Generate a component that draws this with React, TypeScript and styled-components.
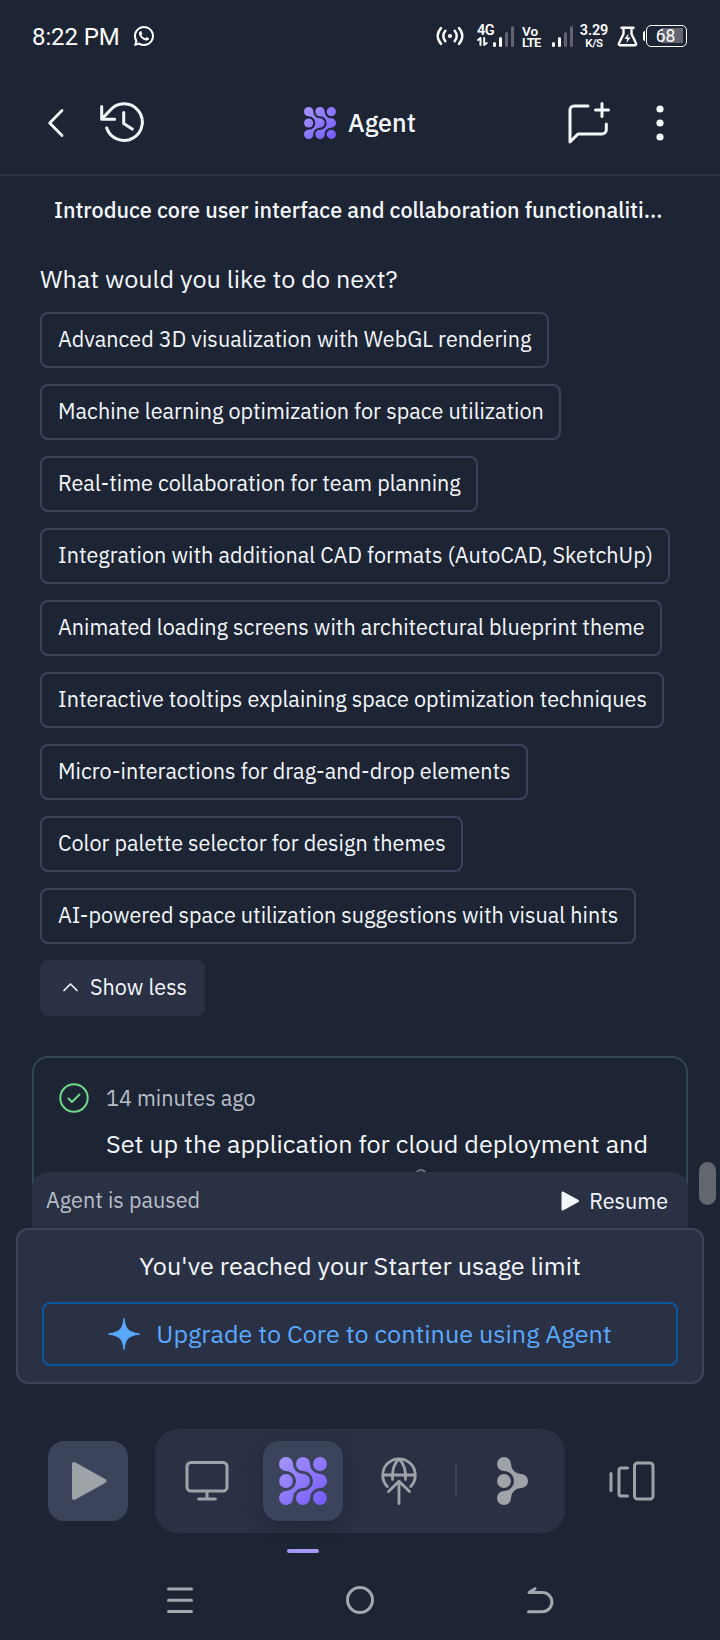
import React from 'react';
import styled, { createGlobalStyle } from 'styled-components';
import { RiWhatsappLine } from 'react-icons/ri';

const color = {
  bg: '#1d2433',
  raised: '#2b3144',
  high: '#3c445b',
  outline: '#3b4259',
  text: '#f4f8fc',
  dim: '#b9bec8',
  icon: '#9ea3a7',
  blue: '#58a9ff',
  blueLine: '#0c559f',
  green: '#6fd98a',
};

const sans = '"IBM Plex Sans", "Noto Sans", sans-serif';
const small = '21.6px';
const large = '25.2px';

const GlobalStyle = createGlobalStyle`
  * { box-sizing: border-box; }
  body { margin: 0; background: ${color.bg}; color: ${color.text}; font-family: ${sans}; }
  svg { display: block; flex: none; }
  button { background: none; border: 0; padding: 0; color: inherit; font: inherit; display: block; }
`;

const Screen = styled.div`
  position: relative;
  width: 720px;
  height: 1640px;
  display: flex;
  flex-direction: column;
  overflow: hidden;
  background: ${color.bg};
`;

/* System status bar */
const StatusBar = styled.div`
  height: 72px;
  flex: none;
  display: flex;
  align-items: center;
  padding: 0 33px 0 32px;
  font-family: Roboto, sans-serif;
  color: #fff;
`;
const Clock = styled.span`
  font-size: 24px;
  letter-spacing: -0.1px;
  line-height: 72px;
  margin-right: 12px;
  padding-top: 1px;
`;
const StatusIcons = styled.div`
  margin-left: auto;
  display: flex;
  align-items: center;
  height: 22px;
`;
const Stack = styled.div<{ $w: number; $ml: number; $center?: boolean }>`
  width: ${(p) => p.$w}px;
  margin-left: ${(p) => p.$ml}px;
  height: 22px;
  display: flex;
  flex-direction: column;
  align-items: ${(p) => (p.$center ? 'center' : 'flex-start')};
`;
const Tiny = styled.span<{ $size: number; $ls?: number }>`
  flex: none;
  font-size: ${(p) => p.$size}px;
  font-weight: 600;
  line-height: 12px;
  height: 12px;
  letter-spacing: ${(p) => p.$ls ?? 0}px;
  white-space: nowrap;
`;
const Bars = styled.div<{ $ml: number }>`
  display: flex;
  align-items: flex-end;
  gap: 3px;
  width: 21px;
  height: 21px;
  margin-left: ${(p) => p.$ml}px;
`;
const Bar = styled.i<{ $h: number; $on?: boolean }>`
  width: 3px;
  height: ${(p) => p.$h}px;
  border-radius: 1.5px;
  background: ${(p) => (p.$on ? '#fff' : '#61646f')};
`;
const Flask = styled.svg`
  margin-left: 9px;
`;
const BatteryCap = styled.i`
  width: 2px;
  height: 10px;
  margin-left: 5px;
  border-radius: 2px 0 0 2px;
  background: #fff;
`;
const Battery = styled.div`
  width: 41px;
  height: 22px;
  margin-left: 1px;
  border: 1.5px solid #fff;
  border-radius: 5px;
  display: flex;
  align-items: center;
  justify-content: center;
  font-size: 17.5px;
  line-height: 20px;
  padding-right: 2px;
  background: linear-gradient(#646773, #646773) no-repeat 14px 2px / 22px 15px;
`;

/* App header */
const Header = styled.header`
  height: 104px;
  flex: none;
  display: grid;
  grid-template-columns: 1fr auto 1fr;
  align-items: center;
  padding: 0 56px 0 46px;
  border-bottom: 2px solid #2a3143;
`;
const HeaderSide = styled.div<{ $end?: boolean }>`
  display: flex;
  align-items: center;
  justify-content: ${(p) => (p.$end ? 'flex-end' : 'flex-start')};
  gap: ${(p) => (p.$end ? 44 : 33)}px;
`;
const AppTitle = styled.h1`
  margin: 0 0 0 10px;
  display: flex;
  align-items: center;
  gap: 12px;
  font: 500 ${large}/32px ${sans};
`;

/* Conversation */
const Feed = styled.main`
  height: 1012px;
  flex: none;
  overflow: hidden;
  padding: 18px 32px 0;
`;
const Heading = styled.h2`
  margin: 0 22px;
  font-size: ${small};
  font-weight: 500;
  line-height: 32px;
  white-space: nowrap;
`;
const Question = styled.p`
  margin: 37px 8px 17px;
  font: 400 ${large}/32px ${sans};
`;
const Options = styled.div`
  display: flex;
  flex-direction: column;
  align-items: flex-start;
  gap: 16px;
  padding-left: 8px;
`;
const Chip = styled.button`
  height: 56px;
  padding: 0 15.4px 2px 16px;
  border: 2px solid ${color.outline};
  border-radius: 8px;
  font-size: ${small};
  line-height: 50px;
  text-align: left;
  white-space: nowrap;
`;
const ShowLess = styled.button`
  width: 165px;
  height: 56px;
  padding: 0 0 2px 23px;
  display: flex;
  align-items: center;
  gap: 12px;
  border-radius: 8px;
  background: ${color.raised};
  font-size: ${small};
  white-space: nowrap;
`;
const Card = styled.article`
  margin-top: 40px;
  height: 260px;
  padding: 24px 24px 0 25px;
  border: 2px solid #344653;
  border-radius: 16px;
`;
const CardMeta = styled.div`
  display: flex;
  align-items: center;
  gap: 17px;
  height: 32px;
  color: ${color.dim};
  font-size: ${small};
`;
const CardText = styled.p`
  margin: 14px 0 0 47px;
  font: 400 ${large}/32px ${sans};
  white-space: nowrap;
`;
const Ring = styled.i`
  display: block;
  width: 12px;
  height: 12px;
  margin: 9px 0 0 356px;
  border: 2px solid #6d727d;
  border-radius: 50%;
`;
const ScrollThumb = styled.div`
  position: absolute;
  right: 4px;
  top: 1162px;
  width: 17px;
  height: 43px;
  border-radius: 9px;
  background: #63656f;
`;

/* Paused state and usage limit */
const PausedBar = styled.div`
  position: relative;
  height: 56px;
  flex: none;
  margin: -16px 32px 0;
  padding: 0 20px 0 14px;
  display: flex;
  align-items: center;
  justify-content: space-between;
  border-radius: 16px 16px 0 0;
  background: ${color.raised};
  color: ${color.dim};
  font-size: ${small};
`;
const Resume = styled.button`
  display: flex;
  align-items: center;
  gap: 10px;
  color: ${color.text};
  padding-top: 2px;
`;
const LimitPanel = styled.section`
  height: 156px;
  flex: none;
  margin: 0 16px;
  padding: 20px 24px 16px;
  display: flex;
  flex-direction: column;
  gap: 20px;
  border: 2px solid #3c445c;
  border-radius: 12px;
  background: ${color.raised};
  font: 400 ${large}/32px ${sans};
`;
const LimitText = styled.p`
  margin: 0;
  text-align: center;
`;
const Upgrade = styled.button`
  height: 64px;
  display: flex;
  align-items: center;
  justify-content: center;
  gap: 16px;
  border: 2px solid ${color.blueLine};
  border-radius: 8px;
  color: ${color.blue};
`;

/* Bottom toolbar */
const Toolbar = styled.nav`
  height: 104px;
  flex: none;
  margin-top: 45px;
  padding: 0 48px;
  display: flex;
  align-items: center;
  justify-content: space-between;
  color: ${color.icon};
`;
const ToolGroup = styled.div`
  height: 104px;
  display: flex;
  align-items: center;
  gap: 16px;
  padding: 12px;
  border-radius: 24px;
  background: ${color.raised};
`;
const Tool = styled.button<{ $filled?: boolean; $active?: boolean }>`
  width: 80px;
  height: 80px;
  display: grid;
  place-items: center;
  border-radius: 16px;
  background: ${(p) => (p.$filled || p.$active ? color.high : 'transparent')};
  box-shadow: ${(p) => (p.$active ? '0 6px 16px rgba(10, 14, 28, 0.28)' : 'none')};
`;
const Separator = styled.i`
  width: 2px;
  height: 32px;
  background: ${color.high};
`;
const ActiveMark = styled.i`
  width: 32px;
  height: 4px;
  flex: none;
  margin: 16px 0 0 287px;
  border-radius: 2px;
  background: #a497f5;
`;
const SystemNav = styled.div`
  display: grid;
  grid-template-columns: repeat(3, 180px);
  justify-content: center;
  justify-items: center;
  align-items: center;
  height: 32px;
  margin-top: 31px;
  color: #a4a7ae;
`;

const NODE =
  'M14 7A10 10 0 0 0 24 17A7 7 0 0 1 24 31A10 10 0 0 0 14 41A7 7 0 1 1 7 34A10 10 0 0 0 7 14A7 7 0 1 1 14 7Z';

const AgentLogo = ({ size, id }: { size: number; id: string }) => (
  <svg width={size} height={size} viewBox="0 0 48 48" fill={`url(#${id})`}>
    <defs>
      <linearGradient id={id} gradientUnits="userSpaceOnUse" x1="0" y1="0" x2="48" y2="48">
        <stop stopColor="#a795ff" />
        <stop offset="1" stopColor="#7359fd" />
      </linearGradient>
    </defs>
    <path d={`${NODE} M31 7A10 10 0 0 0 41 17A7 7 0 0 1 41 31A10 10 0 0 0 31 41A7 7 0 1 1 24 34A10 10 0 0 0 24 14A7 7 0 1 1 31 7Z`} />
    <circle cx="7" cy="24" r="6.9" />
    <circle cx="41" cy="7" r="6.9" />
    <circle cx="41" cy="41" r="6.9" />
  </svg>
);

const stroke = {
  fill: 'none',
  stroke: 'currentColor',
  strokeLinecap: 'round' as const,
  strokeLinejoin: 'round' as const,
};

const options = [
  'Advanced 3D visualization with WebGL rendering',
  'Machine learning optimization for space utilization',
  'Real-time collaboration for team planning',
  'Integration with additional CAD formats (AutoCAD, SketchUp)',
  'Animated loading screens with architectural blueprint theme',
  'Interactive tooltips explaining space optimization techniques',
  'Micro-interactions for drag-and-drop elements',
  'Color palette selector for design themes',
  'AI-powered space utilization suggestions with visual hints',
];

const Signal = ({ ml }: { ml: number }) => (
  <Bars $ml={ml}>
    <Bar $h={5} $on />
    <Bar $h={10} $on />
    <Bar $h={15} />
    <Bar $h={21} />
  </Bars>
);

export default function App() {
  return (
    <>
      <GlobalStyle />
      <Screen>
        <StatusBar>
          <Clock>8:22 PM</Clock>
          <RiWhatsappLine size={24} />
          <StatusIcons>
            <svg width="28" height="20" viewBox="0 0 28 20" {...stroke} strokeWidth="2.5">
              <path d="M5 2.2C.7 7 .7 13 5 17.8M9.3 4.8c-2.6 3-2.6 7.4 0 10.4M23 2.2c4.3 4.8 4.3 10.8 0 15.6M18.7 4.8c2.6 3 2.6 7.4 0 10.4" />
              <circle cx="14" cy="10" r="1.3" fill="currentColor" strokeWidth="1.5" />
            </svg>
            <Stack $w={17} $ml={13}>
              <Tiny $size={14.5} $ls={-0.6}>4G</Tiny>
              <svg width="11" height="9" viewBox="0 0 11 9" {...stroke} strokeWidth="2">
                <path d="M1 3 3.5 1v7M7.2 1v7L9.7 6" />
              </svg>
            </Stack>
            <Signal ml={-1} />
            <Stack $w={20} $ml={8}>
              <Tiny $size={13.5}>Vo</Tiny>
              <Tiny $size={13} $ls={-0.7}>LTE</Tiny>
            </Stack>
            <Signal ml={10} />
            <Stack $w={28} $ml={7} $center>
              <Tiny $size={14.5} $ls={-0.1}>3.29</Tiny>
              <Tiny $size={11.5} $ls={-0.4}>K/S</Tiny>
            </Stack>
            <Flask width="21" height="21" viewBox="0 0 21 21" {...stroke} strokeWidth="2.4">
              <path d="M4.5 1.7h12M6.5 2v6L2 17.3q-.7 2 1 2h15q1.7 0 1-2L14.5 8V2" />
              <path d="M11.5 7.5 7.5 13h2.7l-.7 4 4-5.5h-2.7z" fill="currentColor" stroke="none" />
            </Flask>
            <BatteryCap />
            <Battery>68</Battery>
          </StatusIcons>
        </StatusBar>

        <Header>
          <HeaderSide>
            <svg width="20" height="30" viewBox="0 0 20 30" {...stroke} strokeWidth="2.8">
              <path d="M16 2.5 3.7 15 16 27.5" />
            </svg>
            <svg width="46" height="42" viewBox="0 0 46 42" {...stroke} strokeWidth="3">
              <path d="M7.7 26A18.3 18.3 0 1 0 11 8.4L2.9 17M2.7 4.5v12.8h13M24.7 10.5v11l8.5 5.6" />
            </svg>
          </HeaderSide>
          <AppTitle>
            <AgentLogo size={32} id="logo-small" />
            Agent
          </AppTitle>
          <HeaderSide $end>
            <svg width="46" height="46" viewBox="0 0 46 46" {...stroke} strokeWidth="3">
              <path d="M22 6H8a4 4 0 0 0-4 4v32l8-8h24a4.3 4.3 0 0 0 4.3-4.3V24M36 3.5v13M29.5 10h13" />
            </svg>
            <svg width="8" height="38" viewBox="0 0 8 38" fill="currentColor">
              <circle cx="4" cy="5" r="3.6" />
              <circle cx="4" cy="19" r="3.6" />
              <circle cx="4" cy="33" r="3.6" />
            </svg>
          </HeaderSide>
        </Header>

        <Feed>
          <Heading>Introduce core user interface and collaboration functionaliti...</Heading>
          <Question>What would you like to do next?</Question>
          <Options>
            {options.map((label) => (
              <Chip key={label}>{label}</Chip>
            ))}
            <ShowLess>
              <svg width="15" height="10" viewBox="0 0 15 10" {...stroke} strokeWidth="1.7">
                <path d="M1 8.5 7.5 2 14 8.5" />
              </svg>
              Show less
            </ShowLess>
          </Options>
          <Card>
            <CardMeta>
              <svg width="30" height="30" viewBox="0 0 30 30" {...stroke} stroke={color.green} strokeWidth="2">
                <circle cx="15" cy="15" r="13.7" />
                <path d="m9.5 15.5 3.5 3.5 7.5-7.5" />
              </svg>
              14 minutes ago
            </CardMeta>
            <CardText>Set up the application for cloud deployment and</CardText>
            <Ring />
          </Card>
        </Feed>

        <PausedBar>
          <span>Agent is paused</span>
          <Resume>
            <svg width="18" height="20" viewBox="0 0 18 20" fill="currentColor" stroke="currentColor" strokeWidth="2" strokeLinejoin="round">
              <path d="M1.5 1.5v17L17 10z" />
            </svg>
            Resume
          </Resume>
        </PausedBar>
        <LimitPanel>
          <LimitText>You've reached your Starter usage limit</LimitText>
          <Upgrade>
            <svg width="32" height="32" viewBox="0 0 32 32" fill="currentColor" stroke="currentColor" strokeWidth="1" strokeLinejoin="round">
              <path d="M16 .5c1.3 10 3.5 13.700 15.500 15.500-12 1.800-14.200 5.500-15.500 15.500-1.300-10-3.500-13.700-15.500-15.500C12.500 14.200 14.700 10.500 16 .5z" />
            </svg>
            Upgrade to Core to continue using Agent
          </Upgrade>
        </LimitPanel>

        <Toolbar>
          <Tool $filled>
            <svg width="38" height="40" viewBox="0 0 38 40" fill="currentColor" stroke="currentColor" strokeWidth="4" strokeLinejoin="round">
              <path d="M5 3v34L35.5 20z" />
            </svg>
          </Tool>
          <ToolGroup>
            <Tool>
              <svg width="44" height="40" viewBox="0 0 44 40" {...stroke} strokeWidth="3">
                <rect x="2" y="1.5" width="40" height="28.5" rx="4" />
                <path d="M22 30v8M13.7 38h16.6" />
              </svg>
            </Tool>
            <Tool $active>
              <AgentLogo size={48} id="logo-large" />
            </Tool>
            <Tool>
              <svg width="48" height="48" viewBox="0 0 48 48" {...stroke} strokeWidth="2.8">
                <path d="M12.3 29.5a16.3 16.3 0 1 1 23.4 0M8 18h32M17.5 22.5C17 14 19.5 6 24 2c4.5 4 7 12 6.5 20.5M24 46.5V24.5M13.5 34.5 24 24.3l10.5 10.2" />
              </svg>
            </Tool>
            <Separator />
            <Tool>
              <svg width="32" height="48" viewBox="0 0 32 48" fill="currentColor">
                <path d={NODE} />
                <circle cx="7" cy="24" r="6.9" />
              </svg>
            </Tool>
          </ToolGroup>
          <Tool>
            <svg width="46" height="40" viewBox="0 0 46 40" {...stroke} strokeWidth="3">
              <path d="M2 12.5v17M18.5 7H12q-2 0-2 2v24q0 2 2 2h6.5" />
              <rect x="25.5" y="2" width="18.5" height="36" rx="3" />
            </svg>
          </Tool>
        </Toolbar>
        <ActiveMark />
        <SystemNav>
          <svg width="28" height="28" viewBox="0 0 28 28" {...stroke} strokeWidth="3">
            <path d="M2.5 3h23M2.5 14.3h23M2.5 25.6h23" />
          </svg>
          <svg width="30" height="30" viewBox="0 0 30 30" {...stroke} strokeWidth="3">
            <circle cx="15" cy="15" r="12.5" />
          </svg>
          <svg width="28" height="28" viewBox="0 0 28 28" {...stroke} strokeWidth="3">
            <path d="M9 2.7 3 6.5h13.3a9.6 9.6 0 0 1 0 19.2H2.5" />
          </svg>
        </SystemNav>
        <ScrollThumb />
      </Screen>
    </>
  );
}
